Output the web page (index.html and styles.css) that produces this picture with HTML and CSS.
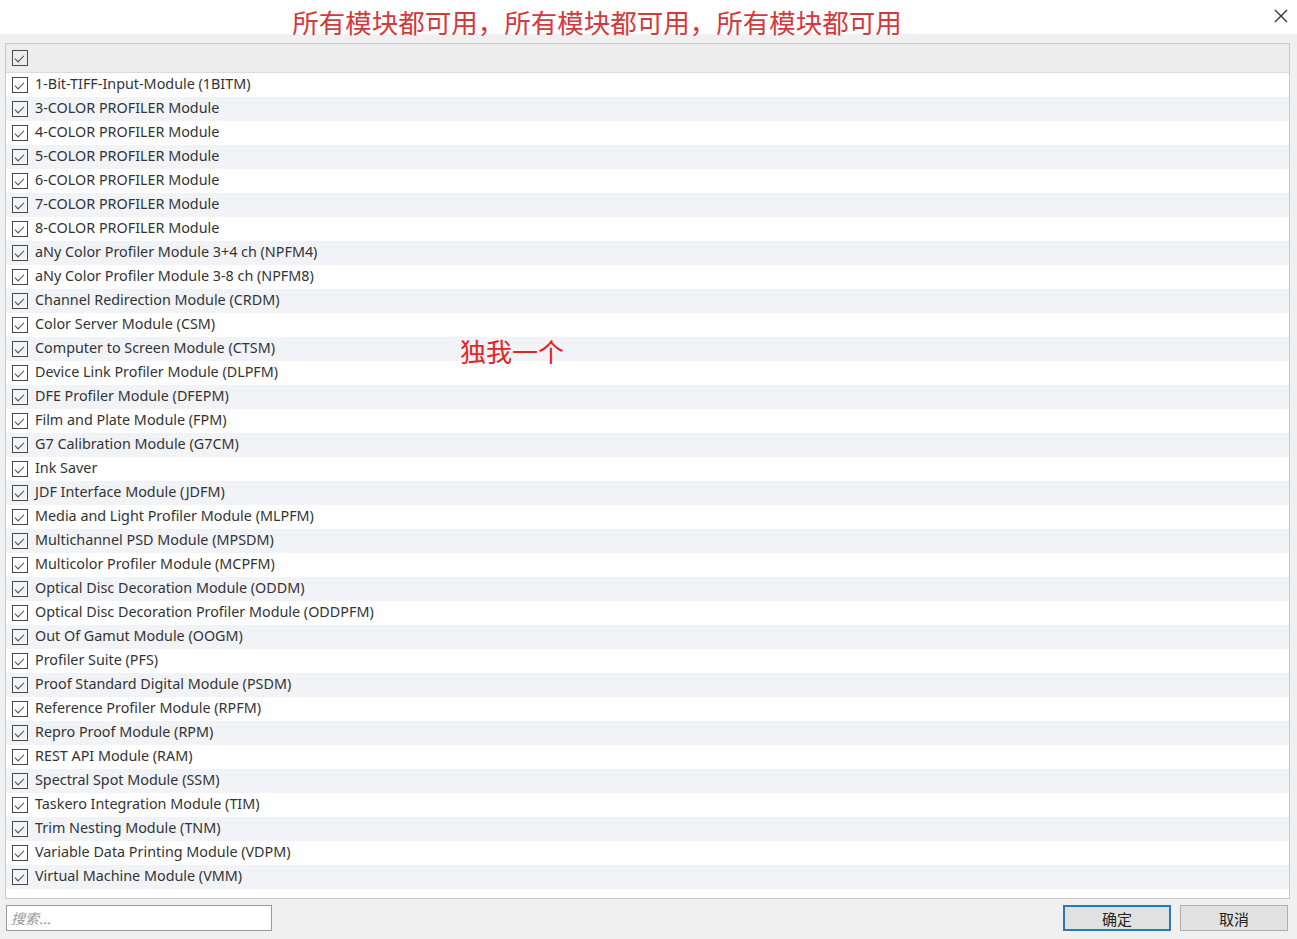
FILE: index.html
```html
<!DOCTYPE html>
<html lang="zh">
<head>
    <meta charset="UTF-8">
    <title>模块</title>
    <link rel="stylesheet" href="styles.css">
</head>
<body>
    <div class="title-bar">
        <span class="title">所有模块都可用，所有模块都可用，所有模块都可用</span>
        <span class="close">
            <svg width="14" height="14" viewBox="0 0 14 14"><path d="M1 1L13 13M13 1L1 13" stroke="#333" stroke-width="1.4"/></svg>
        </span>
    </div>
    <div class="dialog">
        <div class="list">
            <div class="list-head"><span class="cb"></span></div>
            <div class="rows">
                <div class="row"><span class="cb"></span>1-Bit-TIFF-Input-Module (1BITM)</div>
                <div class="row"><span class="cb"></span>3-COLOR PROFILER Module</div>
                <div class="row"><span class="cb"></span>4-COLOR PROFILER Module</div>
                <div class="row"><span class="cb"></span>5-COLOR PROFILER Module</div>
                <div class="row"><span class="cb"></span>6-COLOR PROFILER Module</div>
                <div class="row"><span class="cb"></span>7-COLOR PROFILER Module</div>
                <div class="row"><span class="cb"></span>8-COLOR PROFILER Module</div>
                <div class="row"><span class="cb"></span>aNy Color Profiler Module 3+4 ch (NPFM4)</div>
                <div class="row"><span class="cb"></span>aNy Color Profiler Module 3-8 ch (NPFM8)</div>
                <div class="row"><span class="cb"></span>Channel Redirection Module (CRDM)</div>
                <div class="row"><span class="cb"></span>Color Server Module (CSM)</div>
                <div class="row"><span class="cb"></span>Computer to Screen Module (CTSM)<span class="note">独我一个</span></div>
                <div class="row"><span class="cb"></span>Device Link Profiler Module (DLPFM)</div>
                <div class="row"><span class="cb"></span>DFE Profiler Module (DFEPM)</div>
                <div class="row"><span class="cb"></span>Film and Plate Module (FPM)</div>
                <div class="row"><span class="cb"></span>G7 Calibration Module (G7CM)</div>
                <div class="row"><span class="cb"></span>Ink Saver</div>
                <div class="row"><span class="cb"></span>JDF Interface Module (JDFM)</div>
                <div class="row"><span class="cb"></span>Media and Light Profiler Module (MLPFM)</div>
                <div class="row"><span class="cb"></span>Multichannel PSD Module (MPSDM)</div>
                <div class="row"><span class="cb"></span>Multicolor Profiler Module (MCPFM)</div>
                <div class="row"><span class="cb"></span>Optical Disc Decoration Module (ODDM)</div>
                <div class="row"><span class="cb"></span>Optical Disc Decoration Profiler Module (ODDPFM)</div>
                <div class="row"><span class="cb"></span>Out Of Gamut Module (OOGM)</div>
                <div class="row"><span class="cb"></span>Profiler Suite (PFS)</div>
                <div class="row"><span class="cb"></span>Proof Standard Digital Module (PSDM)</div>
                <div class="row"><span class="cb"></span>Reference Profiler Module (RPFM)</div>
                <div class="row"><span class="cb"></span>Repro Proof Module (RPM)</div>
                <div class="row"><span class="cb"></span>REST API Module (RAM)</div>
                <div class="row"><span class="cb"></span>Spectral Spot Module (SSM)</div>
                <div class="row"><span class="cb"></span>Taskero Integration Module (TIM)</div>
                <div class="row"><span class="cb"></span>Trim Nesting Module (TNM)</div>
                <div class="row"><span class="cb"></span>Variable Data Printing Module (VDPM)</div>
                <div class="row"><span class="cb"></span>Virtual Machine Module (VMM)</div>
            </div>
        </div>
        <div class="footer">
            <input type="text" class="search" placeholder="搜索...">
            <div class="buttons">
                <button class="btn btn-default">确定</button>
                <button class="btn">取消</button>
            </div>
        </div>
    </div>
</body>
</html>
```

FILE: styles.css
```css
body {
    margin: 0;
    font-family: "Noto Sans", "Noto Sans CJK SC", sans-serif;
    color: #333;
    background-color: #f0f0f0;
    width: 1297px;
    height: 939px;
    overflow: hidden;
}
.title-bar {
    position: relative;
    height: 34px;
    background-color: #fff;
    text-align: center;
}
.title {
    display: inline-block;
    margin-left: -103px;
    font-family: "Noto Sans CJK SC", sans-serif;
    font-size: 26.5px;
    line-height: 44px;
    color: #d4393b;
    position: relative;
    z-index: 1;
}
.close {
    position: absolute;
    right: 9px;
    top: 6px;
}
.dialog {
    padding: 9px 7px 0 5px;
}
.list {
    border: 1px solid #c9c9c9;
    background-color: #fff;
    height: 854px;
}
.list-head {
    height: 28px;
    background-color: #ededed;
    border-bottom: 1px solid #dcdcdc;
    display: flex;
    align-items: center;
    padding-left: 6px;
}
.row {
    position: relative;
    height: 24px;
    display: flex;
    align-items: center;
    padding-left: 6px;
    font-size: 14.35px;
    line-height: 20px;
    padding-bottom: 3px;
    box-sizing: border-box;
    white-space: nowrap;
}
.row:nth-child(even) {
    background-color: #f1f3f7;
}
.cb {
    width: 14px;
    height: 14px;
    border: 1.5px solid #4a4a4a;
    margin-right: 7px;
    flex-shrink: 0;
    position: relative;
}
.row .cb {
    margin-top: 3px;
}
.cb::after {
    content: "";
    position: absolute;
    left: 3px;
    top: 1px;
    width: 8px;
    height: 4px;
    border-left: 1.6px solid #444;
    border-bottom: 1.6px solid #444;
    transform: translate(-1px, 3px) rotate(-45deg);
    transform-origin: 50% 50%;
}
.note {
    position: absolute;
    left: 454px;
    top: 50%;
    transform: translateY(-40%);
    font-family: "Noto Sans CJK SC", sans-serif;
    font-size: 26px;
    color: #e8231f;
}
.footer {
    display: flex;
    justify-content: space-between;
    align-items: center;
    padding: 6px 2px 0 1px;
}
.search {
    width: 256px;
    height: 20px;
    padding: 2px 4px;
    border: 1px solid #9a9a9a;
    font-family: "Noto Sans CJK SC", sans-serif;
    font-size: 14px;
    background-color: #fff;
}
.search::placeholder {
    color: #9a9a9a;
    font-style: italic;
}
.buttons {
    display: flex;
    gap: 9px;
}
.btn {
    width: 108px;
    height: 26px;
    border: 1px solid #adadad;
    background-color: #e1e1e1;
    font-family: "Noto Sans CJK SC", sans-serif;
    font-size: 15px;
    color: #222;
    padding: 0;
}
.btn-default {
    border: 2px solid #2a79b8;
}
```
